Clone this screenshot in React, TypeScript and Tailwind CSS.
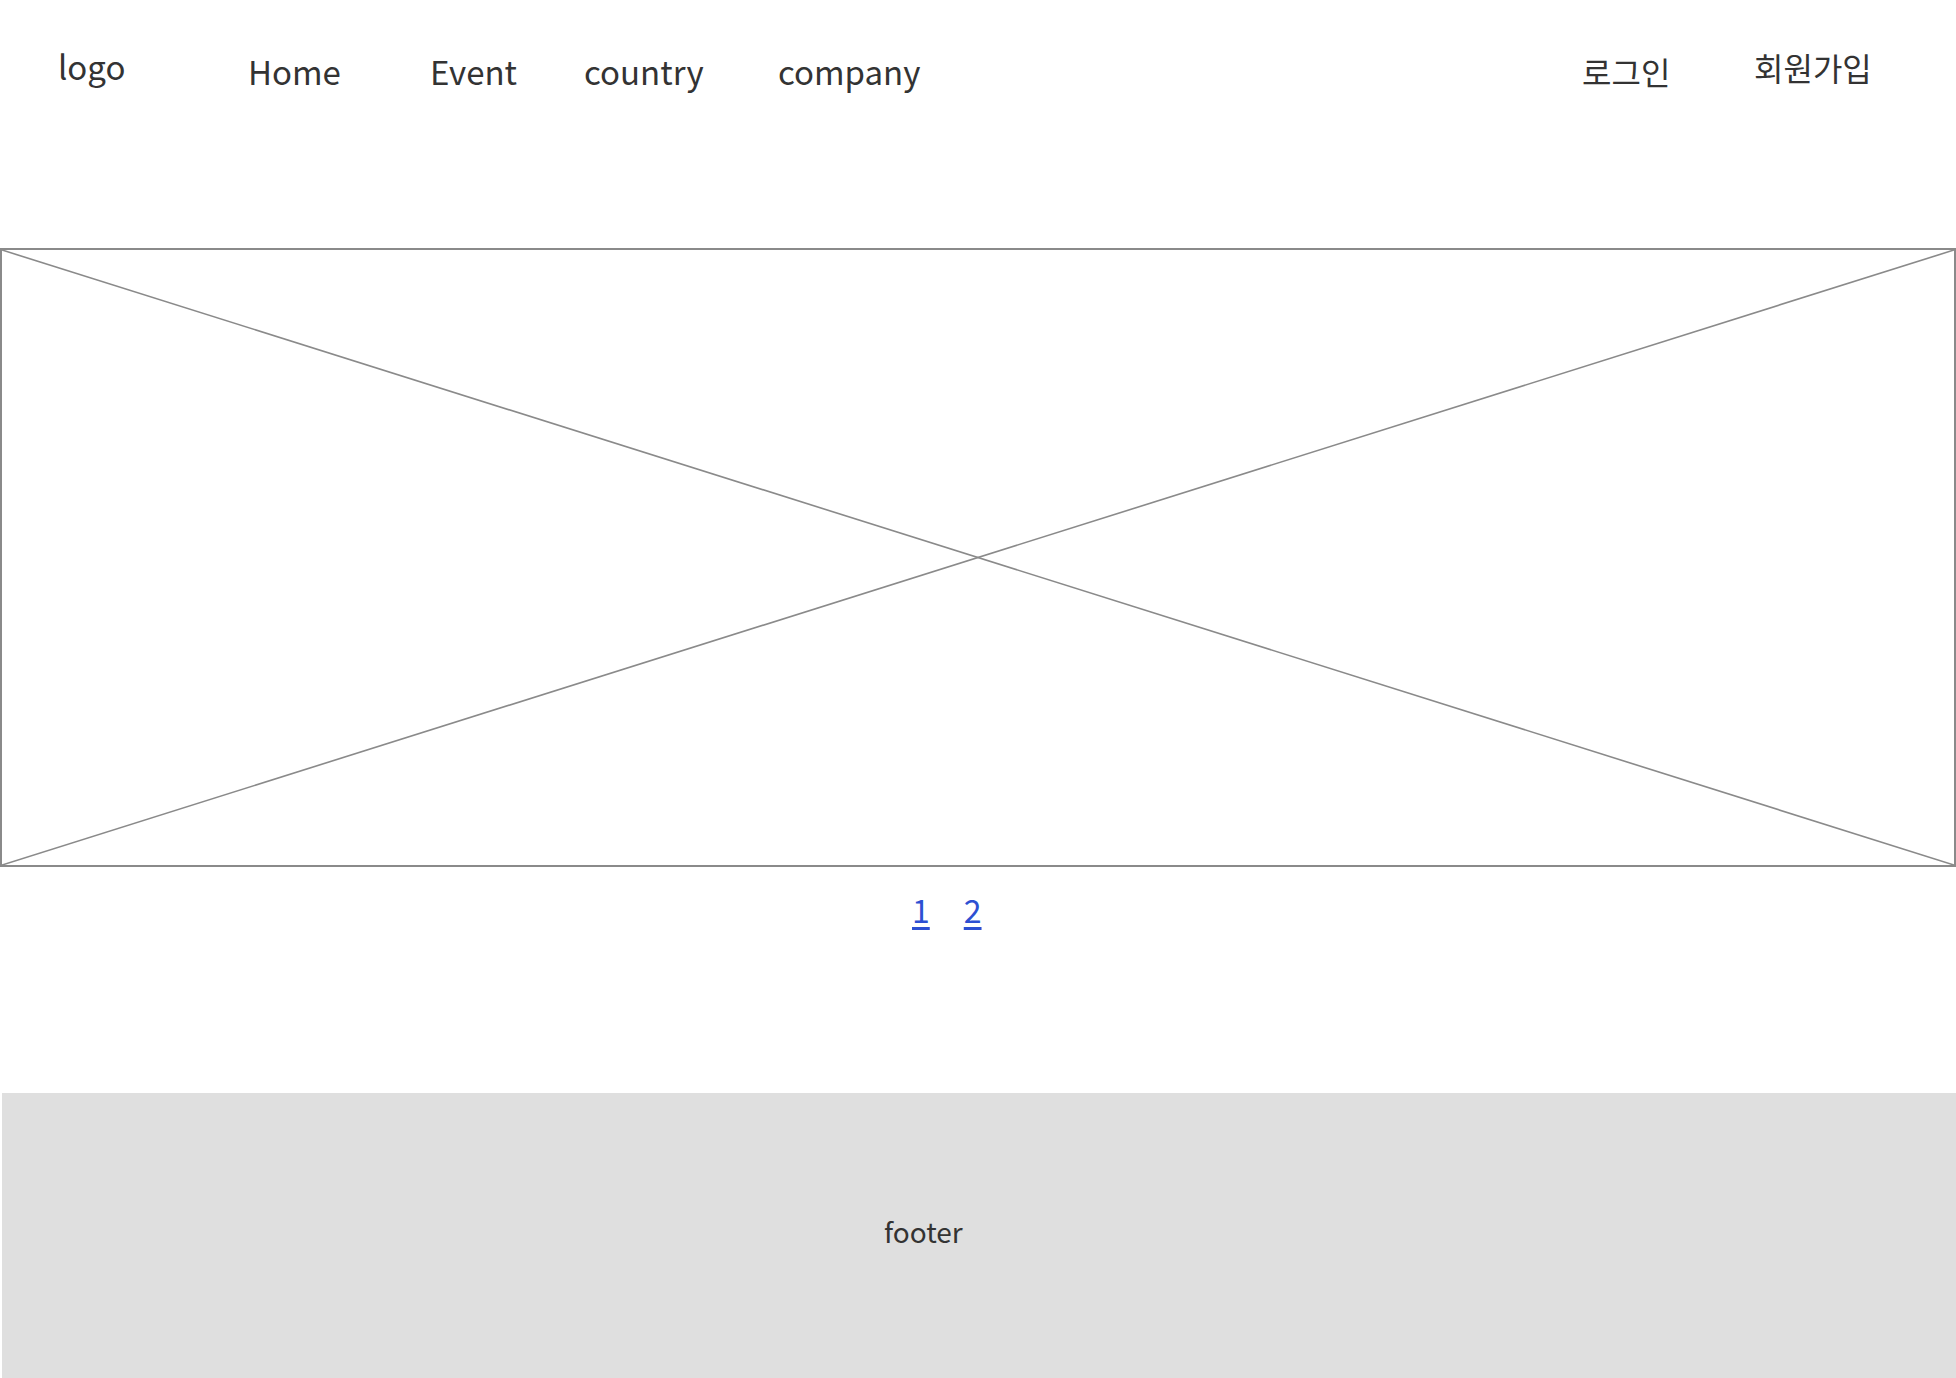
export default function App() {
  return (
    <div
      className="min-h-screen bg-white text-[#333333]"
      style={{ fontFamily: '"Noto Sans CJK KR", "Noto Sans", sans-serif' }}
    >
      {/* header */}
      <header className="flex h-[248px] items-start pl-[58px] text-[33px] leading-none">
        <a className="mt-[50px] w-[190px] shrink-0">logo</a>
        <nav className="flex items-start">
          <a className="mt-[55px] w-[182px] shrink-0">Home</a>
          <a className="mt-[55px] w-[154px] shrink-0">Event</a>
          <a className="mt-[55px] w-[194px] shrink-0">country</a>
          <a className="mt-[55px] w-[804px] shrink-0">company</a>
        </nav>
        <div className="flex items-start text-[32px]">
          <a className="mt-[55px] w-[172px] shrink-0">로그인</a>
          <a className="mt-[51px] shrink-0">회원가입</a>
        </div>
      </header>

      {/* main visual */}
      <section className="relative h-[619px] w-full border-2 border-[#8a8a8a]">
        <svg
          className="absolute inset-0 h-full w-full"
          preserveAspectRatio="none"
          viewBox="0 0 100 100"
        >
          <line x1="0" y1="0" x2="100" y2="100" stroke="#8a8a8a" strokeWidth="1.6" vectorEffect="non-scaling-stroke" />
          <line x1="100" y1="0" x2="0" y2="100" stroke="#8a8a8a" strokeWidth="1.6" vectorEffect="non-scaling-stroke" />
        </svg>
      </section>

      {/* pager */}
      <div className="flex h-[226px] items-start pl-[912px] pt-[26px] text-[32px] leading-none text-[#2d50d2]">
        <a className="underline underline-offset-[4px]">1</a>
        <a className="ml-[34px] underline underline-offset-[4px]">2</a>
      </div>

      {/* footer */}
      <footer className="ml-[2px] flex h-[300px] items-start bg-[#dfdfdf] pl-[882px] pt-[124px]">
        <p className="text-[28px] leading-none">footer</p>
      </footer>
    </div>
  );
}
